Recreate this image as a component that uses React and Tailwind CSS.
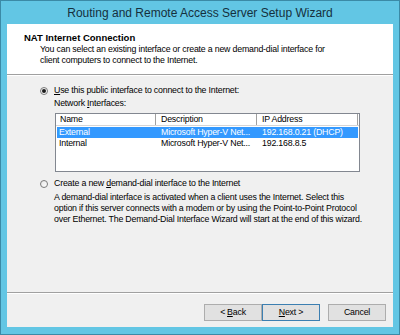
import React from 'react';

const font = { fontFamily: '"Liberation Sans", Arial, sans-serif' };

function Radio({ checked }) {
  return (
    <div className="w-[8px] h-[8px] rounded-full border border-[#7a7a7a] bg-gradient-to-br from-[#e6e6e6] to-white flex items-center justify-center shrink-0">
      {checked && <div className="w-[4px] h-[4px] rounded-full bg-[#1a1a1a]" />}
    </div>
  );
}

function Button({ children, primary }) {
  return (
    <div
      className={`w-[58px] h-[17px] flex items-center justify-center bg-[#e1e1e1] border text-[8.8px] text-black ${
        primary ? 'border-[#3c7fb1]' : 'border-[#adadad]'
      }`}
    >
      {children}
    </div>
  );
}

const rows = [
  { name: 'External', desc: 'Microsoft Hyper-V Net...', ip: '192.168.0.21 (DHCP)', selected: true },
  { name: 'Internal', desc: 'Microsoft Hyper-V Net...', ip: '192.168.8.5', selected: false },
];

export default function App() {
  return (
    <div
      className="w-[400px] h-[335px] bg-[#62c6e4] border border-[#3b8aa6] flex flex-col tracking-[-0.2px]"
      style={font}
    >
      {/* Title bar */}
      <div className="h-[23px] flex items-center justify-center text-[12px] text-[#15303d] tracking-normal">
        Routing and Remote Access Server Setup Wizard
      </div>

      <div className="mx-[6px] flex-1 mb-[7px] bg-[#f0f0f0] flex flex-col">
        {/* Header */}
        <div className="bg-white h-[50px] pt-[8px] pl-[17px]">
          <div className="text-[9.5px] leading-[12px] font-bold text-black tracking-normal">NAT Internet Connection</div>
          <div className="pl-[16px] text-[8.8px] leading-[11px] text-black">
            <div>You can select an existing interface or create a new demand-dial interface for</div>
            <div>client computers to connect to the Internet.</div>
          </div>
        </div>
        <div className="h-px bg-[#a0a0a0]" />
        <div className="h-px bg-white" />

        {/* Body */}
        <div className="flex-1 pt-[9px] pl-[33px] text-[8.8px] leading-[11px] text-black">
          <div className="flex items-center gap-[6px]">
            <Radio checked />
            <span>
              <span className="underline">U</span>se this public interface to connect to the Internet:
            </span>
          </div>
          <div className="pl-[14px] mt-[2px]">
            Network <span className="underline">I</span>nterfaces:
          </div>
          <div className="ml-[15px] mt-[4px] w-[305px] h-[59px] bg-white border border-[#828790]">
            <div className="flex h-[12px] border-b border-[#d5d5d5]">
              <div className="w-[100px] pl-[4px] border-r border-[#a0a0a0]">Name</div>
              <div className="w-[101px] pl-[5px] border-r border-[#a0a0a0]">Description</div>
              <div className="w-[101px] pl-[5px] border-r border-[#a0a0a0]">IP Address</div>
            </div>
            <div className="pt-[1px] px-px">
              {rows.map((r) => (
                <div
                  key={r.name}
                  className={`flex h-[11px] ${r.selected ? 'bg-[#3399ff] text-white' : 'text-black'}`}
                >
                  <div className="w-[99px] pl-[2px]">{r.name}</div>
                  <div className="w-[101px] pl-[5px]">{r.desc}</div>
                  <div className="w-[101px] pl-[5px]">{r.ip}</div>
                </div>
              ))}
            </div>
          </div>

          <div className="flex items-center gap-[6px] mt-[6px]">
            <Radio />
            <span>
              Create a new <span className="underline">d</span>emand-dial interface to the Internet
            </span>
          </div>
          <div className="pl-[14px] mt-[3px]">
            <div>A demand-dial interface is activated when a client uses the Internet. Select this</div>
            <div>option if this server connects with a modem or by using the Point-to-Point Protocol</div>
            <div>over Ethernet. The Demand-Dial Interface Wizard will start at the end of this wizard.</div>
          </div>
        </div>

        {/* Footer */}
        <div className="h-px bg-[#a0a0a0]" />
        <div className="h-px bg-white" />
        <div className="h-[33px] pt-[10px] pr-[7px] flex justify-end">
          <Button>
            &lt; <span className="underline ml-[2px]">B</span>ack
          </Button>
          <Button primary>
            <span className="underline">N</span>ext &gt;
          </Button>
          <div className="w-[8px]" />
          <Button>Cancel</Button>
        </div>
      </div>
    </div>
  );
}
